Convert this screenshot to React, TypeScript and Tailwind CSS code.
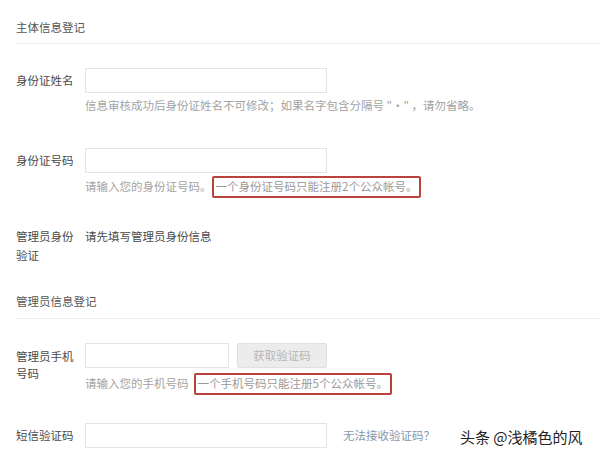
const font = { fontFamily: '"Noto Sans CJK SC", "Noto Sans", sans-serif' };

const Label = ({ children }: { children: React.ReactNode }) => (
  <div className="w-[62px] mr-[7px] shrink-0 text-[11.5px] leading-[19px] text-[#4a4a4a]">
    {children}
  </div>
);

const Input = ({ w = "w-[242px]" }: { w?: string }) => (
  <div className={`${w} h-[25px] border border-[#e4e4e4] bg-white`} />
);

const Flag = ({ children }: { children: React.ReactNode }) => (
  <span className="border-2 border-[#b9423c] rounded-[2px] px-[2px] h-[22px] flex items-center text-[#9a9a9a]">
    {children}
  </span>
);

export default function App() {
  return (
    <div
      className="relative w-[600px] h-[453px] bg-white overflow-hidden pl-4 pt-[17px] text-[11.5px]"
      style={font}
    >
      <div className="leading-[20px] text-[#555]">主体信息登记</div>
      <div className="mt-[6px] h-px bg-[#ececec]" />

      {/* 身份证姓名 */}
      <div className="mt-[24px] flex items-center">
        <Label>身份证姓名</Label>
        <Input />
      </div>
      <div className="ml-[69px] mt-[2px] leading-[20px] text-[#a3a3a3]">
        信息审核成功后身份证姓名不可修改；如果名字包含分隔号 "·" ，请勿省略。
      </div>

      {/* 身份证号码 */}
      <div className="mt-[33px] flex items-center">
        <Label>身份证号码</Label>
        <Input />
      </div>
      <div className="ml-[69px] mt-[3px] flex items-center text-[#a3a3a3]">
        <span>请输入您的身份证号码。</span>
        <Flag>一个身份证号码只能注册2个公众帐号。</Flag>
      </div>

      {/* 管理员身份验证 */}
      <div className="mt-[29px] flex items-start">
        <Label>管理员身份验证</Label>
        <div className="leading-[19px] text-[#4a4a4a]">请先填写管理员身份信息</div>
      </div>

      <div className="mt-[26px] leading-[20px] text-[#555]">管理员信息登记</div>
      <div className="mt-[7px] h-px bg-[#ececec]" />

      {/* 管理员手机号码 */}
      <div className="mt-[24px] flex items-start">
        <div className="w-[62px] mr-[7px] shrink-0 pt-[5px] leading-[17px] text-[#4a4a4a]">
          管理员手机号码
        </div>
        <div>
          <div className="flex gap-2">
            <Input w="w-[144px]" />
            <div className="w-[90px] h-[25px] border border-[#e0e0e0] bg-[#ececec] rounded-[2px] flex items-center justify-center text-[#b5b5b5]">
              获取验证码
            </div>
          </div>
          <div className="mt-[5px] flex items-center text-[#a3a3a3]">
            <span className="mr-[5px]">请输入您的手机号码</span>
            <Flag>一个手机号码只能注册5个公众帐号。</Flag>
          </div>
        </div>
      </div>

      {/* 短信验证码 */}
      <div className="mt-[28px] flex items-center">
        <Label>短信验证码</Label>
        <Input />
        <span className="ml-[16px] text-[#8796ad]">无法接收验证码？</span>
      </div>

      <div className="absolute left-[460px] top-[427px] text-[15px] leading-[20px] text-[#222]">
        头条 @浅橘色的风
      </div>
    </div>
  );
}
